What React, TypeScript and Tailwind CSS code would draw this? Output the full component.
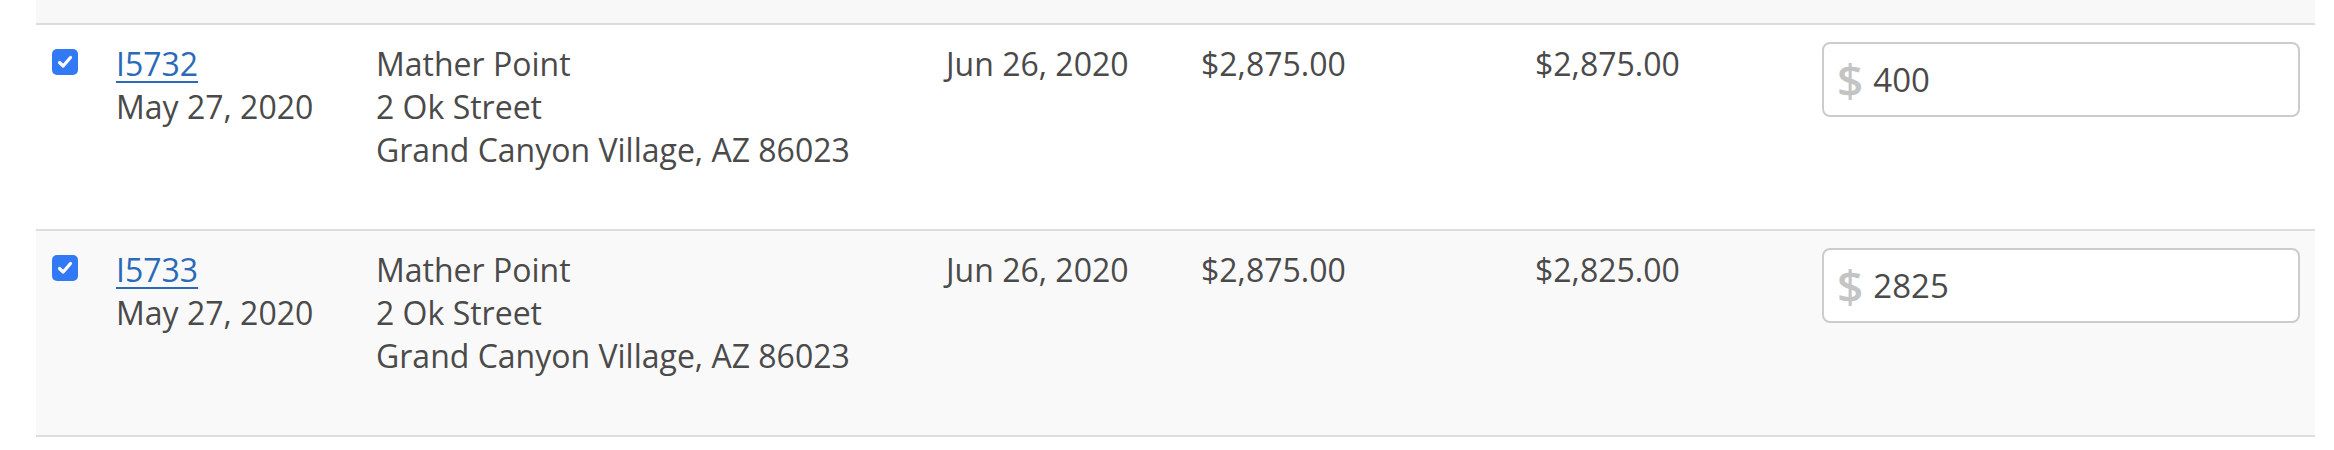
import React from "react";

type Row = { id: string; date: string; due: string; amount: string; balance: string; pay: string; bg: string };

const rows: Row[] = [
  { id: "I5732", date: "May 27, 2020", due: "Jun 26, 2020", amount: "$2,875.00", balance: "$2,875.00", pay: "400", bg: "bg-white" },
  { id: "I5733", date: "May 27, 2020", due: "Jun 26, 2020", amount: "$2,875.00", balance: "$2,825.00", pay: "2825", bg: "bg-[#f9f9f9]" },
];

function Check() {
  return (
    <div className="mt-[7px] w-[26px] h-[26px] rounded-[5px] bg-[#3179f5] flex items-center justify-center">
      <svg width="18" height="18" viewBox="0 0 18 18" fill="none">
        <path d="M3.5 9.5 L7.2 13 L14.5 4.5" stroke="white" strokeWidth="3.2" strokeLinecap="round" strokeLinejoin="round" />
      </svg>
    </div>
  );
}

export default function App() {
  return (
    <div
      className="w-[2334px] h-[450px] bg-white text-[#4a4a4a] text-[32px] leading-[43px]"
      style={{ fontFamily: '"Open Sans", "Liberation Sans", sans-serif' }}
    >
      <div className="ml-[36px] w-[2279px]">
        <div className="h-[25px] bg-[#f8f8f8] border-b-2 border-[#dddddd]" />
        {rows.map((r) => (
          <div
            key={r.id}
            className={`grid grid-cols-[64px_260px_570px_255px_334px_287px_509px] h-[206px] border-b-2 border-[#dddddd] ${r.bg}`}
          >
            <div className="pl-[16px] pt-[17px]">
              <Check />
            </div>
            <div className="pl-[16px] pt-[17px] flex flex-col">
              <a className="text-[#2a6ab8] underline decoration-2 underline-offset-[5px] w-fit">{r.id}</a>
              <span className="whitespace-nowrap">{r.date}</span>
            </div>
            <div className="pl-[16px] pt-[17px] flex flex-col">
              <span>Mather Point</span>
              <span>2 Ok Street</span>
              <span className="whitespace-nowrap">Grand Canyon Village, AZ 86023</span>
            </div>
            <div className="pl-[16px] pt-[17px] whitespace-nowrap">{r.due}</div>
            <div className="pl-[16px] pt-[17px]">{r.amount}</div>
            <div className="pl-[16px] pt-[17px]">{r.balance}</div>
            <div className="pl-[16px] pt-[17px]">
              <div className="w-[478px] h-[75px] border-2 border-[#cccccc] rounded-[8px] bg-white flex items-center pl-[13px]">
                <span className="text-[#c4c4c4] text-[46px] font-semibold leading-none mr-[10px] -mt-[2px]">$</span>
                <span className="text-[33px] leading-none text-[#4a4a4a]">{r.pay}</span>
              </div>
            </div>
          </div>
        ))}
      </div>
    </div>
  );
}
